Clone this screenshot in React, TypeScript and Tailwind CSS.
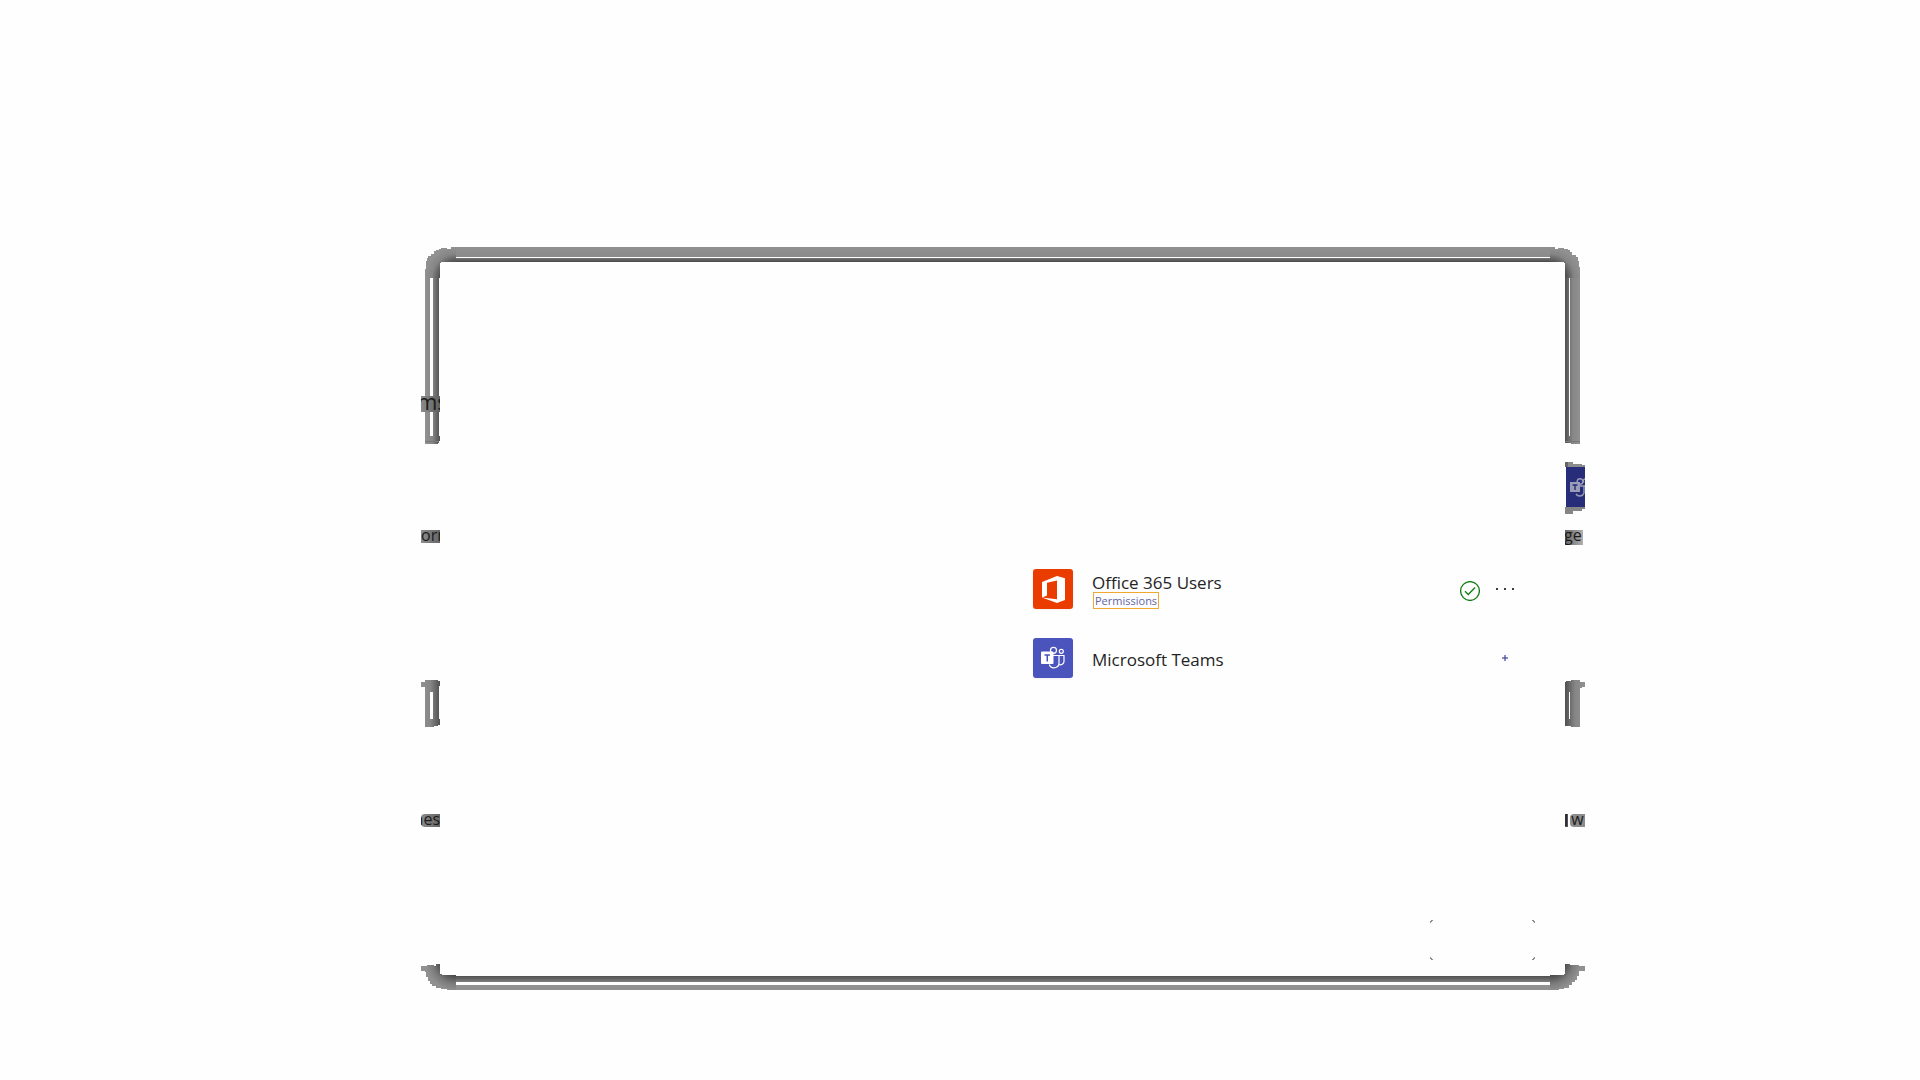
import React from "react";

const face = "font-['Open_Sans','Noto_Sans',sans-serif]";

function OfficeIcon() {
  return (
    <svg viewBox="0 0 40 40" className="size-10 shrink-0 drop-shadow-xs" aria-hidden="true">
      <rect width="40" height="40" rx="3" fill="#eb3c00" />
      <path d="M9 13 L24 7 L32 9.300 V31 L24 34 L9 28.500 L24 30.300 V11.500 L14 13.800 V26.500 L9 28.500 Z" fill="#fff" />
    </svg>
  );
}

function TeamsGlyph() {
  return (
    <>
      <g fill="none" stroke="currentColor" strokeWidth="1.200">
        <circle cx="20.500" cy="12.300" r="3" />
        <circle cx="28.300" cy="13.300" r="2" />
        <path d="M20 17.500 H26 V24.500 A5 5 0 0 1 16.300 26.500" />
        <path d="M26 17.500 H31 V23.500 A3.600 3.600 0 0 1 26 26.500" />
      </g>
      <rect x="8" y="13.500" width="12.500" height="12.500" rx="1" fill="currentColor" />
      <path d="M11.500 17 H17 M14.250 17 V23.500" stroke="#4b53bc" strokeWidth="1.500" fill="none" />
    </>
  );
}

function TeamsIcon() {
  return (
    <svg viewBox="0 0 40 40" className="size-10 shrink-0 text-white drop-shadow-xs" aria-hidden="true">
      <rect width="40" height="40" rx="3" fill="#4b53bc" />
      <TeamsGlyph />
    </svg>
  );
}

function TeamsSliver() {
  return (
    <svg viewBox="0 0 20 52" className="h-[52px] w-5 shrink-0" aria-hidden="true">
      <path d="M0 0 H8 V2 H17 V3 H20 V5 H0 Z" fill="#8b8b8b" />
      <path d="M0 45 H20 V47 H17 V49 H8 V52 H0 Z" fill="#858585" />
      <rect x="0" y="0" width="3" height="5" fill="#666" />
      <rect x="1" y="5" width="19" height="40" fill="#272d78" />
      <g fill="none" stroke="#9b9db8" strokeWidth="1.400">
        <circle cx="15" cy="19.500" r="2.800" />
        <path d="M19 20.500 A2 2 0 0 1 20 17" />
        <path d="M14 24 H20 M19 24 V31 A4.500 4.500 0 0 1 11 32" />
      </g>
      <rect x="5" y="20" width="10" height="10" fill="#9b9db8" />
      <path d="M7.500 23 H12.500 M10 23 V28" stroke="#272d78" strokeWidth="1.400" />
    </svg>
  );
}

function Defs({ id, axis }: { id: string; axis: "left" | "right" }) {
  return (
    <defs>
      <linearGradient id={id} x1={axis === "left" ? "0" : "1"} x2={axis === "left" ? "1" : "0"} y1="0" y2="0">
        <stop offset="0" stopColor="#919191" />
        <stop offset=".5" stopColor="#868686" />
        <stop offset="1" stopColor="#505050" />
      </linearGradient>
    </defs>
  );
}

function TopCorner({ side }: { side: "left" | "right" }) {
  const id = "top-" + side;
  return (
    <svg viewBox="0 0 35 31" className="h-[31px] w-[35px] shrink-0" aria-hidden="true">
      <defs>
        <radialGradient id={id} gradientUnits="userSpaceOnUse" cx={side === "left" ? 35 : 0} cy="31" r="31">
          <stop offset=".5" stopColor="#4c4c4c" />
          <stop offset=".78" stopColor="#858585" />
          <stop offset="1" stopColor="#919191" />
        </radialGradient>
      </defs>
      {side === "left" ? (
        <path d="M4 31 V22 H5 V14 H6 V11 H7 V9 H10 V7 H13 V4 H15 V3 H18 V2 H20 V1 H26 V2 H30 V0 H35 V15 H20 V16 H19 V31 Z" fill={`url(#${id})`} />
      ) : (
        <path d="M0 0 H5 V2 H8 V1 H14 V2 H18 V3 H20 V5 H22 V8 H26 V10 H28 V14 H29 V20 H30 V31 H15 V16 H14 V15 H0 Z" fill={`url(#${id})`} />
      )}
    </svg>
  );
}

function BottomCorner({ side }: { side: "left" | "right" }) {
  const id = "bottom-" + side;
  return (
    <svg viewBox="0 0 35 26" className="h-[26px] w-[35px] shrink-0" aria-hidden="true">
      <defs>
        <radialGradient id={id} gradientUnits="userSpaceOnUse" cx={side === "left" ? 35 : 0} cy="-4" r="31">
          <stop offset=".5" stopColor="#4c4c4c" />
          <stop offset=".78" stopColor="#7c7c7c" />
          <stop offset="1" stopColor="#919191" />
        </radialGradient>
      </defs>
      {side === "left" ? (
        <path d="M0 2 H6 V1 H13 V2 H15 V0 H19 V10 H21 V11 H35 V26 H26 V25 H20 V24 H15 V22 H11 V20 H9 V17 H7 V13 H5 V8 H4 V7 H0 Z" fill={`url(#${id})`} />
      ) : (
        <path d="M0 11 H14 V10 H15 V0 H20 V1 H29 V2 H35 V7 H29 V12 H27 V16 H25 V18 H22 V21 H19 V24 H14 V25 H9 V26 H0 Z" fill={`url(#${id})`} />
      )}
    </svg>
  );
}

function LongRail({ side }: { side: "left" | "right" }) {
  const id = "long-" + side;
  return side === "left" ? (
    <svg viewBox="0 0 19 166" className="h-[166px] w-[19px] shrink-0" aria-hidden="true">
      <Defs id={id} axis="left" />
      <path d="M4 0 H18 V158 H19 V163 H18 V165 H17 V166 H4 Z" fill={`url(#${id})`} />
      <rect x="9" width="3" height="158" fill="#fefefe" />
      <path d="M4 163.500 H18" stroke="#777" />
    </svg>
  ) : (
    <svg viewBox="0 0 20 166" className="h-[166px] w-5 shrink-0" aria-hidden="true">
      <Defs id={id} axis="right" />
      <path d="M0 0 H15 V166 H6 V165 H0 Z" fill={`url(#${id})`} />
      <rect x="4" width="1" height="158" fill="#fefefe" />
      <path d="M0 163.500 H15" stroke="#777" />
    </svg>
  );
}

function ShortRail({ side }: { side: "left" | "right" }) {
  const id = "short-" + side;
  return side === "left" ? (
    <svg viewBox="0 0 19 47" className="h-[47px] w-[19px] shrink-0" aria-hidden="true">
      <Defs id={id} axis="left" />
      <path d="M0 2 H4 V0 H17 V1 H19 V6 H18 V39 H19 V45 H17 V46 H13 V47 H4 V7 H0 Z" fill={`url(#${id})`} />
      <rect x="9" y="12" width="3" height="27" fill="#fefefe" />
    </svg>
  ) : (
    <svg viewBox="0 0 20 47" className="h-[47px] w-5 shrink-0" aria-hidden="true">
      <Defs id={id} axis="right" />
      <path d="M0 2 H1 V1 H6 V0 H15 V2 H20 V7 H17 V8 H15 V47 H6 V46 H0 Z" fill={`url(#${id})`} />
      <rect x="4" y="12" width="1" height="27" fill="#fefefe" />
    </svg>
  );
}

function Tick({ className }: { className: string }) {
  return (
    <svg viewBox="0 0 3 3" className={"absolute size-[3px] " + className} aria-hidden="true">
      <path d="M0 3 V1 H1 V0 H3 V1 H2 V2 H1 V3 Z" fill="#8a8a8a" />
    </svg>
  );
}

export default function App() {
  return (
    <main className={"flex min-h-screen flex-col bg-[#fefefe] pt-[247px] text-[#242424] " + face}>
      <section className="mr-[335px] ml-[421px] flex flex-col">
        <div className="flex">
          <TopCorner side="left" />
          <div className="flex h-[15px] flex-1 flex-col">
            <div className="h-[10px] bg-linear-to-b from-[#919191] to-[#8a8a8a]" />
            <div className="h-px" />
            <div className="h-1 bg-linear-to-b from-[#747474] to-[#4a4a4a]" />
          </div>
          <TopCorner side="right" />
        </div>

        <div className="flex h-[686px] justify-between">
          <div className="flex w-[19px] flex-col font-medium">
            <div className="relative">
              <LongRail side="left" />
              <span className="absolute top-[118px] left-0 flex h-4 w-[19px] items-center overflow-hidden bg-linear-to-r from-[#8c8c8c] to-[#606060] text-[22px] leading-4 text-[#1b1b1b]">
                <span className="-mt-1.5 -ml-1">ms</span>
              </span>
            </div>
            <span className="mt-[86px] flex h-[13px] w-[19px] items-center overflow-hidden bg-linear-to-r from-[#8c8c8c] to-[#666666] text-base leading-3 text-[#1b1b1b]">
              <span className="-mt-1">orr</span>
            </span>
            <div className="mt-[137px]">
              <ShortRail side="left" />
            </div>
            <span className="mt-[87px] flex h-[13px] w-[19px] items-center justify-end overflow-hidden rounded-l-sm bg-linear-to-r from-[#8c8c8c] to-[#666666] text-base leading-3 text-[#1b1b1b]">
              <span className="-mt-1">nes</span>
            </span>
          </div>

          <div className="flex flex-1 flex-col items-end">
            <div className="mt-[291px] mr-[51px] flex w-[481px] flex-col gap-[29px]">
              <div className="flex h-10 items-start">
                <OfficeIcon />
                <div className="ml-[19px] flex flex-1 flex-col items-start">
                  <h2 className="mt-1 text-[17px] leading-5">Office 365 Users</h2>
                  <a href="#permissions" className="-mt-px ml-px flex h-[17px] items-center border border-[#f0a830] px-px text-[11px] leading-[15px] text-[#6264a7]">
                    Permissions
                  </a>
                </div>
                <svg viewBox="0 0 20 20" className="mt-3 mr-4 size-5" fill="none" stroke="#107c10" role="img" aria-label="Connected">
                  <circle cx="10" cy="10" r="9.400" strokeWidth="1.300" />
                  <path d="M5 10.300 L8.300 13.500 L15 6.500" strokeWidth="1.300" />
                </svg>
                <button type="button" aria-label="More options" className="mt-4 flex h-2 w-[18px] items-center justify-between">
                  <span className="size-0.5 bg-[#3c3c3c]" />
                  <span className="size-0.5 bg-[#3c3c3c]" />
                  <span className="size-0.5 bg-[#3c3c3c]" />
                </button>
              </div>
              <div className="flex h-10 items-center">
                <TeamsIcon />
                <h2 className="mt-1 ml-[19px] flex-1 text-[17px] leading-5">Microsoft Teams</h2>
                <button type="button" aria-label="Add connection" className="mr-1.5">
                  <svg viewBox="0 0 6 6" className="size-1.5" aria-hidden="true">
                    <path d="M2 0 H4 V2 H6 V4 H4 V6 H2 V4 H0 V2 H2 Z" fill="#8a8cc4" />
                    <rect x="2" y="2" width="2" height="2" fill="#6264a7" />
                  </svg>
                </button>
              </div>
            </div>
            <button type="button" aria-label="Continue" className="relative mt-[242px] mr-[30px] h-10 w-[105px]">
              <Tick className="top-0 left-0" />
              <Tick className="top-0 right-0 rotate-90" />
              <Tick className="bottom-0 left-0 -rotate-90" />
              <Tick className="right-0 bottom-0 rotate-180" />
            </button>
          </div>

          <div className="flex w-5 flex-col font-medium">
            <LongRail side="right" />
            <div className="mt-[18px]">
              <TeamsSliver />
            </div>
            <span className="mt-4 flex h-[15px] w-[18px] items-center overflow-hidden bg-linear-to-r from-[#666666] to-[#b0b0b0] text-base leading-3 text-[#1b1b1b]">
              <span className="-mt-1.5 -ml-px">ge</span>
            </span>
            <div className="mt-[135px]">
              <ShortRail side="right" />
            </div>
            <span className="mt-[87px] flex h-[13px] w-5 justify-between text-base leading-3 text-[#1b1b1b]">
              <span className="flex w-[3px] items-center overflow-hidden bg-[#555]">
                <span className="-mt-0.5 -ml-px">l</span>
              </span>
              <span className="flex w-[15px] items-center justify-center overflow-hidden rounded-l-sm bg-[#8c8c8c]">
                <span className="-mt-1">w</span>
              </span>
            </span>
          </div>
        </div>

        <div className="flex">
          <BottomCorner side="left" />
          <div className="flex flex-1 flex-col pt-3">
            <div className="h-1.5 bg-linear-to-b from-[#505050] to-[#7e7e7e]" />
            <div className="h-[3px]" />
            <div className="h-[5px] bg-[#919191]" />
          </div>
          <BottomCorner side="right" />
        </div>
      </section>
    </main>
  );
}
